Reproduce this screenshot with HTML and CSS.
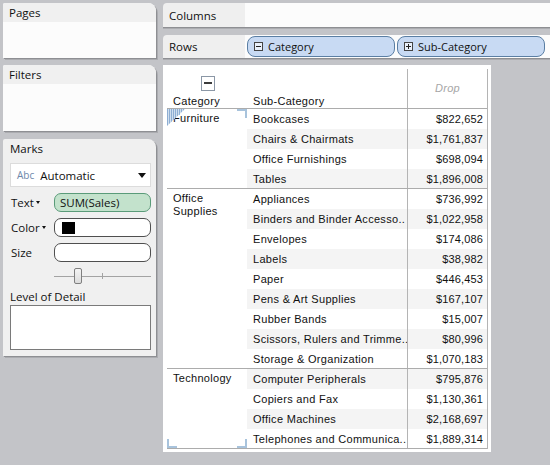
FILE: index.html
```html
<!DOCTYPE html>
<html>
<head>
<meta charset="utf-8">
<link rel="stylesheet" href="styles.css">
</head>
<body>
<div class="app">
  <div class="left">
    <div class="card pages">
      <div class="card-head">Pages</div>
      <div class="card-body"></div>
    </div>
    <div class="card filters">
      <div class="card-head">Filters</div>
      <div class="card-body"></div>
    </div>
    <div class="card marks">
      <div class="marks-title">Marks</div>
      <div class="dropdown">
        <span class="abc">Abc</span>
        <span class="auto">Automatic</span>
        <span class="caret"></span>
      </div>
      <div class="mrow">
        <span class="mlabel">Text<span class="mini-caret"></span></span>
        <span class="field green">SUM(Sales)</span>
      </div>
      <div class="mrow">
        <span class="mlabel">Color<span class="mini-caret"></span></span>
        <span class="field"><span class="swatch"></span></span>
      </div>
      <div class="mrow">
        <span class="mlabel">Size</span>
        <span class="field"></span>
      </div>
      <div class="slider">
        <span class="track"></span>
        <span class="tick"></span>
        <span class="thumb"></span>
      </div>
      <div class="lod-label">Level of Detail</div>
      <div class="lod-box"></div>
    </div>
  </div>

  <div class="right">
    <div class="shelf cols">
      <div class="shelf-label">Columns</div>
      <div class="shelf-body"></div>
    </div>
    <div class="shelf rows">
      <div class="shelf-label">Rows</div>
      <div class="shelf-body pills">
        <span class="pill"><span class="pbox minus"></span>Category</span>
        <span class="pill"><span class="pbox plus"></span>Sub-Category</span>
      </div>
    </div>

    <div class="viz">
      <div class="tbl">
        <div class="thead">
          <div class="h-cat">
            <span class="collapse"></span>
            <span class="h-label">Category</span>
          </div>
          <div class="h-sub"><span class="h-label">Sub-Category</span></div>
          <div class="h-val">Drop</div>
        </div>

        <div class="group g4">
          <div class="cat c4">Furniture
            <span class="hatch"><svg width="18" height="17" viewBox="0 0 18 17"><defs><pattern id="st" width="2" height="17" patternUnits="userSpaceOnUse"><rect width="1" height="17" fill="#8eaed3"/><rect x="1" width="1" height="17" fill="#cfdeee"/></pattern></defs><polygon points="0,0 18,0 0,17" fill="url(#st)"/></svg></span>
            <span class="br br-tr"></span>
          </div>
          <div class="sub">Bookcases</div><div class="val">$822,652</div>
          <div class="sub sh">Chairs &amp; Chairmats</div><div class="val sh">$1,761,837</div>
          <div class="sub">Office Furnishings</div><div class="val">$698,094</div>
          <div class="sub sh">Tables</div><div class="val sh">$1,896,008</div>
        </div>

        <div class="group g9">
          <div class="cat c9">Office<br>Supplies</div>
          <div class="sub">Appliances</div><div class="val">$736,992</div>
          <div class="sub sh">Binders and Binder Accesso..</div><div class="val sh">$1,022,958</div>
          <div class="sub">Envelopes</div><div class="val">$174,086</div>
          <div class="sub sh">Labels</div><div class="val sh">$38,982</div>
          <div class="sub">Paper</div><div class="val">$446,453</div>
          <div class="sub sh">Pens &amp; Art Supplies</div><div class="val sh">$167,107</div>
          <div class="sub">Rubber Bands</div><div class="val">$15,007</div>
          <div class="sub sh">Scissors, Rulers and Trimme..</div><div class="val sh">$80,996</div>
          <div class="sub">Storage &amp; Organization</div><div class="val">$1,070,183</div>
        </div>

        <div class="group g4">
          <div class="cat c4">Technology
            <span class="br br-bl"></span>
            <span class="br br-br"></span>
          </div>
          <div class="sub sh">Computer Peripherals</div><div class="val sh">$795,876</div>
          <div class="sub">Copiers and Fax</div><div class="val">$1,130,361</div>
          <div class="sub sh">Office Machines</div><div class="val sh">$2,168,697</div>
          <div class="sub">Telephones and Communica..</div><div class="val">$1,889,314</div>
        </div>
      </div>
    </div>
  </div>
</div>
</body>
</html>
```
FILE: styles.css
```css
* { box-sizing: border-box; }
html, body { margin: 0; padding: 0; }
body {
  width: 550px;
  height: 465px;
  overflow: hidden;
  background: #c3c4c8;
  font-family: "Open Sans", "Liberation Sans", sans-serif;
  font-size: 11.5px;
  color: #111;
}
.app {
  display: flex;
  gap: 7px;
  padding: 3px 0 0 3px;
}
.left {
  width: 153px;
  display: flex;
  flex-direction: column;
}
.card {
  background: #fcfcfc;
  border-radius: 2px 8px 0 0;
  box-shadow: 1px 1px 0 #8e8f93, 2px 2px 0 #abacb0;
  display: flex;
  flex-direction: column;
  overflow: hidden;
}
.card-head {
  background: #f0f0f0;
  height: 19px;
  line-height: 19px;
  padding-left: 6px;
}
.pages { height: 55px; margin-bottom: 7px; }
.filters { height: 66px; margin-bottom: 8px; }
.marks {
  height: 217px;
  background: #f0f0f0;
  padding: 0 5px 0 7px;
}
.marks-title {
  height: 20px;
  line-height: 19px;
}
.dropdown {
  height: 24px;
  margin: 4px 0 0 0;
  background: #fff;
  border: 1px solid #dcdcdc;
  display: flex;
  align-items: center;
  padding-left: 6px;
}
.abc { color: #6d88aa; font-size: 10px; margin-right: 6px; }
.auto { flex: 1; }
.caret {
  width: 0; height: 0;
  border-left: 4px solid transparent;
  border-right: 4px solid transparent;
  border-top: 5px solid #111;
  margin-right: 4px;
}
.mrow {
  display: flex;
  align-items: center;
  height: 19px;
  margin-top: 6px;
}
.mlabel {
  width: 44px;
  display: flex;
  align-items: center;
  padding-left: 1px;
}
.mini-caret {
  width: 0; height: 0;
  border-left: 2.5px solid transparent;
  border-right: 2.5px solid transparent;
  border-top: 3px solid #111;
  margin-left: 2px;
}
.field {
  flex: 1;
  height: 19px;
  border: 1px solid #4f4f4f;
  border-radius: 7px;
  background: #fff;
  display: flex;
  align-items: center;
  padding-left: 7px;
}
.field.green {
  background: #c3e2cc;
  border-color: #5a9b79;
  padding-left: 5px;
}
.swatch {
  width: 13px; height: 12px;
  background: #000;
}
.slider {
  position: relative;
  height: 24px;
  margin: 1px 0 0 44px;
}
.track {
  position: absolute;
  left: 0; right: 0; top: 13px;
  height: 1px;
  background: #a3a3a3;
}
.tick {
  position: absolute;
  left: 48px; top: 10px;
  width: 1px; height: 6px;
  background: #a3a3a3;
}
.thumb {
  position: absolute;
  left: 20px; top: 5px;
  width: 8px; height: 16px;
  border: 1px solid #7f7f7f;
  border-radius: 2px;
  background: linear-gradient(#f4f4f4, #dcdcdc);
}
.lod-label {
  height: 17px;
  line-height: 17px;
  margin-top: 1px;
}
.lod-box {
  height: 45px;
  background: #fff;
  border: 1px solid #7a7a7a;
}

.right {
  width: 387px;
  display: flex;
  flex-direction: column;
}
.shelf {
  display: flex;
  border-radius: 4px 0 0 0;
  box-shadow: 0 1px 0 #8e8f93, 0 2px 0 #abacb0;
  overflow: hidden;
}
.cols { height: 24px; margin-bottom: 8px; }
.rows { height: 23px; margin-bottom: 7px; }
.shelf-label {
  width: 82px;
  background: #efefef;
  padding-left: 6px;
  display: flex;
  align-items: center;
}
.shelf-body {
  flex: 1;
  background: #fcfcfc;
}
.pills {
  display: flex;
  gap: 2px;
  padding: 1px 0 0 2px;
}
.pill {
  width: 148px;
  height: 21px;
  background: #c8daf3;
  border: 1px solid #5a7ea3;
  border-radius: 8px;
  display: flex;
  align-items: center;
  padding-left: 6px;
  font-size: 11px;
}
.pbox {
  width: 9px; height: 9px;
  border: 1px solid #444;
  background: #e9f0fa;
  position: relative;
  margin-right: 5px;
}
.pbox::before {
  content: "";
  position: absolute;
  left: 1px; top: 3px;
  width: 5px; height: 1px;
  background: #222;
}
.plus::after {
  content: "";
  position: absolute;
  left: 3px; top: 1px;
  width: 1px; height: 5px;
  background: #222;
}

.viz {
  width: 328px;
  height: 387px;
  background: #fff;
  padding: 4px 0 0 4px;
}
.tbl {
  width: 321px;
  border-right: 1px solid #b4b4b4;
  font-family: "Liberation Sans", Arial, sans-serif;
  font-size: 11px;
  letter-spacing: 0.3px;
  color: #111;
}
.thead {
  display: grid;
  grid-template-columns: 80px 160px 80px;
  height: 40px;
  border-bottom: 1px solid #acacac;
}
.h-cat {
  display: flex;
  flex-direction: column;
  justify-content: space-between;
  padding: 7px 0 0 6px;
}
.collapse {
  width: 14px; height: 15px;
  margin-left: 28px;
  border: 1px solid #8b97a6;
  background: #fff;
  position: relative;
}
.collapse::before {
  content: "";
  position: absolute;
  left: 2px; top: 5px;
  width: 8px; height: 2px;
  background: #3c3c3c;
}
.h-sub {
  display: flex;
  align-items: flex-end;
  padding: 0 0 0 6px;
}
.h-label { line-height: 14px; }
.h-val {
  border-left: 1px solid #b4b4b4;
  display: flex;
  align-items: center;
  justify-content: center;
  font-style: italic;
  color: #a6a6a6;
  padding-bottom: 2px;
}
.group {
  display: grid;
  grid-template-columns: 80px 160px 80px;
  border-bottom: 1px solid #acacac;
}
.g4 { grid-template-rows: repeat(3, 20px) 19px; }
.g9 { grid-template-rows: repeat(8, 20px) 19px; }
.cat {
  grid-column: 1;
  padding: 3px 0 0 6px;
  line-height: 13px;
  position: relative;
}
.c4 { grid-row: 1 / span 4; }
.c9 { grid-row: 1 / span 9; }
.sub {
  grid-column: 2;
  line-height: 20px;
  padding-left: 6px;
  white-space: nowrap;
  overflow: hidden;
}
.val {
  grid-column: 3;
  line-height: 20px;
  text-align: right;
  padding-right: 4px;
  letter-spacing: 0.15px;
  border-left: 1px solid #b4b4b4;
}
.sh { background: #f4f4f4; }
.hatch {
  position: absolute;
  left: 0; top: 0;
  width: 18px; height: 17px;
}
.hatch svg { display: block; }
.br {
  position: absolute;
  width: 10px; height: 9px;
  border: 0 solid #a8c3dc;
}
.br-tr { right: 0; top: 0; border-top-width: 2px; border-right-width: 2px; }
.br-bl { left: 0; bottom: 0; border-bottom-width: 2px; border-left-width: 2px; }
.br-br { right: 0; bottom: 0; border-bottom-width: 2px; border-right-width: 2px; }
```
